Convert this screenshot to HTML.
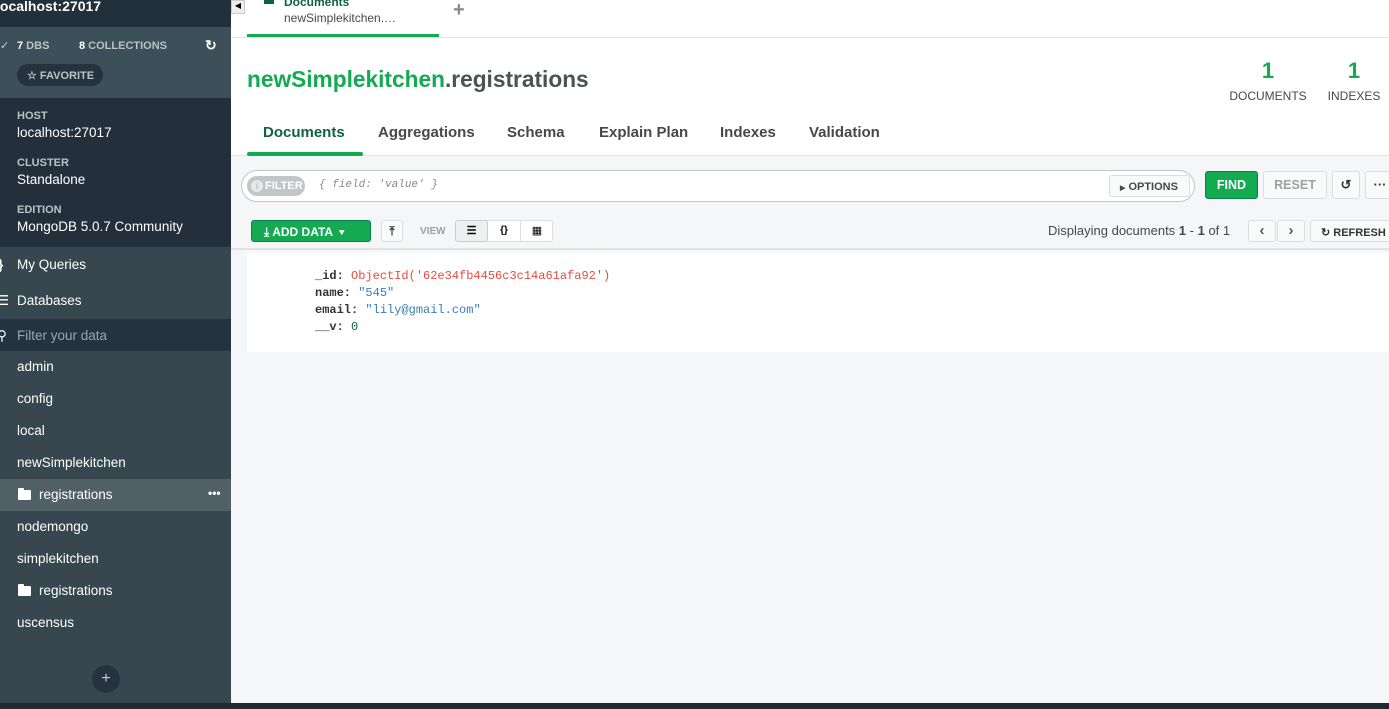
<!DOCTYPE html>
<html><head><style>
*{box-sizing:border-box;margin:0;padding:0}
body{width:1389px;height:709px;overflow:hidden;font-family:"Liberation Sans",sans-serif;background:#f5f6f7;position:relative}
.a{position:absolute}
.sb{left:0;top:0;width:231px;height:709px;background:#37474f;color:#fff}
.lbl{font-size:11px;color:#b8c4c2;font-weight:bold}
.val{font-size:14px;color:#fff}
.ti{font-size:13.5px;color:#fff}
.mono{font-family:"Liberation Mono",monospace;font-size:12px}
.btn{border:1px solid #ddd;border-radius:3px;background:#f9fbfa}
.fold{width:13px;height:10px;background:#fff;border-radius:1px}
.fold:before{content:"";position:absolute;left:0;top:-2px;width:6px;height:3px;background:#fff;border-radius:1px 1px 0 0}
</style></head><body>
<div class="a sb">
 <div class="a" style="left:0;top:0;width:231px;height:27px;background:#22303c"></div>
 <div class="a" style="left:-4px;top:-2px;font-size:14px;font-weight:bold">localhost:27017</div>
 <div class="a" style="left:0;top:27px;width:231px;height:71px;background:#3d4f58"></div>
 <div class="a" style="left:0;top:39px;font-size:11px;color:#c9d1d3">✓</div>
 <div class="a lbl" style="left:17px;top:40px"><span style="color:#fff">7</span> DBS</div>
 <div class="a lbl" style="left:79px;top:40px"><span style="color:#fff">8</span> COLLECTIONS</div>
 <div class="a" style="left:205px;top:37px;font-size:14px;font-weight:bold">↻</div>
 <div class="a" style="left:17px;top:64px;width:86px;height:22px;border-radius:11px;background:#26333f;font-size:11px;color:#b8c4c2;font-weight:bold;padding:5px 0 0 10px">☆ FAVORITE</div>
 <div class="a" style="left:0;top:98px;width:231px;height:149px;background:#232f3b"></div>
 <div class="a lbl" style="left:17px;top:110px">HOST</div>
 <div class="a val" style="left:17px;top:125px;font-size:13.5px">localhost:27017</div>
 <div class="a lbl" style="left:17px;top:157px">CLUSTER</div>
 <div class="a val" style="left:17px;top:172px;font-size:13.5px">Standalone</div>
 <div class="a lbl" style="left:17px;top:204px">EDITION</div>
 <div class="a val" style="left:17px;top:219px;font-size:13.5px">MongoDB 5.0.7 Community</div>
 <div class="a ti" style="left:-2px;top:257px;font-weight:bold">}</div>
 <div class="a ti" style="left:17px;top:257px">My Queries</div>
 <div class="a ti" style="left:-3px;top:293px">☰</div>
 <div class="a ti" style="left:17px;top:293px">Databases</div>
 <div class="a" style="left:0;top:319px;width:231px;height:32px;background:#243340"></div>
 <div class="a ti" style="left:-3px;top:328px">⚲</div>
 <div class="a ti" style="left:17px;top:328px;color:#9aa6ab">Filter your data</div>
 <div class="a ti" style="left:17px;top:359px">admin</div>
 <div class="a ti" style="left:17px;top:391px">config</div>
 <div class="a ti" style="left:17px;top:423px">local</div>
 <div class="a ti" style="left:17px;top:455px">newSimplekitchen</div>
 <div class="a" style="left:0;top:479px;width:231px;height:32px;background:#515f66"></div>
 <div class="a fold" style="left:18px;top:490px"></div>
 <div class="a ti" style="left:39px;top:487px">registrations</div>
 <div class="a" style="left:208px;top:486px;font-size:12px;font-weight:bold">•••</div>
 <div class="a ti" style="left:17px;top:519px">nodemongo</div>
 <div class="a ti" style="left:17px;top:551px">simplekitchen</div>
 <div class="a fold" style="left:18px;top:586px"></div>
 <div class="a ti" style="left:39px;top:583px">registrations</div>
 <div class="a ti" style="left:17px;top:615px">uscensus</div>
 <div class="a" style="left:92px;top:665px;width:28px;height:28px;border-radius:14px;background:#26333f;text-align:center;font-size:16px;line-height:27px;color:#ccc">+</div>
</div>
<div class="a" style="left:0;top:703px;width:1389px;height:6px;background:#1f2a33"></div>
<div class="a" style="left:231px;top:0;width:1158px;height:38px;background:#fff;border-bottom:1px solid #e4e4e4"></div>
<div class="a" style="left:231px;top:0;width:14px;height:14px;background:#eee;border:1px solid #ccc;font-size:8px;text-align:center">◀</div>
<div class="a" style="left:247px;top:0;width:192px;height:37px;background:#fff;border-bottom:3px solid #13aa52"></div>
<div class="a" style="left:264px;top:-4px;width:10px;height:8px;background:#116149"></div>
<div class="a" style="left:284px;top:-5px;font-size:12px;color:#116149;font-weight:bold">Documents</div>
<div class="a" style="left:284px;top:11px;font-size:12px;color:#494747">newSimplekitchen.…</div>
<div class="a" style="left:453px;top:-1px;font-size:20px;color:#888;font-weight:bold">+</div>
<div class="a" style="left:231px;top:38px;width:1158px;height:118px;background:#fff;border-bottom:1px solid #e4e4e4"></div>
<div class="a" style="left:247px;top:66px;font-size:22.7px;font-weight:bold;color:#13aa52">newSimplekitchen<span style="color:#4a5356">.registrations</span></div>
<div class="a" style="left:1228px;top:58px;width:80px;text-align:center;color:#13aa52;font-size:22px;font-weight:bold">1</div>
<div class="a" style="left:1228px;top:89px;width:80px;text-align:center;color:#494747;font-size:12px">DOCUMENTS</div>
<div class="a" style="left:1326px;top:58px;width:56px;text-align:center;color:#13aa52;font-size:22px;font-weight:bold">1</div>
<div class="a" style="left:1326px;top:89px;width:56px;text-align:center;color:#494747;font-size:12px">INDEXES</div>
<div class="a" style="left:263px;top:124px;font-size:15px;font-weight:bold;color:#116149">Documents</div>
<div class="a" style="left:247px;top:152px;width:116px;height:4px;background:#13aa52;border-radius:2px"></div>
<div class="a" style="left:378px;top:124px;font-size:15px;font-weight:bold;color:#494747">Aggregations</div>
<div class="a" style="left:507px;top:124px;font-size:15px;font-weight:bold;color:#494747">Schema</div>
<div class="a" style="left:599px;top:124px;font-size:15px;font-weight:bold;color:#494747">Explain Plan</div>
<div class="a" style="left:720px;top:124px;font-size:15px;font-weight:bold;color:#494747">Indexes</div>
<div class="a" style="left:809px;top:124px;font-size:15px;font-weight:bold;color:#494747">Validation</div>
<div class="a" style="left:241px;top:170px;width:954px;height:32px;background:#fff;border:1px solid #c5c5c5;border-radius:16px"></div>
<div class="a" style="left:247px;top:176px;width:58px;height:20px;border-radius:10px;background:#c1c7c6;color:#fff;font-size:11px;font-weight:bold;padding:4px 0 0 18px">FILTER</div>
<div class="a" style="left:251px;top:180px;width:12px;height:12px;border-radius:6px;background:#e6e9e9;color:#c1c7c6;font-size:9px;text-align:center;line-height:12px;font-weight:bold">i</div>
<div class="a mono" style="left:319px;top:179px;font-size:11px;font-style:italic;color:#8a8a8a">{ field: 'value' }</div>
<div class="a btn" style="left:1109px;top:175px;width:81px;height:22px;font-size:11px;font-weight:bold;color:#494747;padding:5px 0 0 10px"><span style="font-size:7px">▶</span> OPTIONS</div>
<div class="a" style="left:1205px;top:171px;width:53px;height:28px;border-radius:3px;background:#13aa52;border:1px solid #09804c;color:#fff;font-size:12.5px;font-weight:bold;text-align:center;line-height:26px">FIND</div>
<div class="a btn" style="left:1263px;top:171px;width:64px;height:28px;color:#a0a0a0;font-size:12.5px;font-weight:bold;text-align:center;line-height:26px">RESET</div>
<div class="a btn" style="left:1332px;top:171px;width:28px;height:28px;text-align:center;line-height:26px;font-size:13px;font-weight:bold;color:#333">↺</div>
<div class="a btn" style="left:1365px;top:171px;width:30px;height:28px;text-align:center;line-height:26px;font-size:13px;font-weight:bold;color:#333">···</div>
<div class="a" style="left:231px;top:248px;width:1158px;height:2px;background:#e0e2e2"></div>
<div class="a" style="left:251px;top:220px;width:120px;height:22px;background:#13aa52;border:1px solid #09804c;border-radius:3px;color:#fff;font-size:12px;font-weight:bold;padding:4px 0 0 12px">⤓ ADD DATA &nbsp;▾</div>
<div class="a btn" style="left:381px;top:220px;width:22px;height:22px;text-align:center;font-size:12px;line-height:20px;color:#333;font-weight:bold">⤒</div>
<div class="a" style="left:420px;top:226px;font-size:10px;font-weight:bold;color:#a0a0a0">VIEW</div>
<div class="a btn" style="left:455px;top:220px;width:98px;height:22px;background:#fff"></div>
<div class="a" style="left:455px;top:220px;width:33px;height:22px;background:#eef0f0;border:1px solid #ccc;border-radius:3px;text-align:center;font-size:11px;line-height:20px;font-weight:bold">☰</div>
<div class="a" style="left:488px;top:221px;width:33px;height:20px;border-right:1px solid #ddd;text-align:center;font-size:10px;font-weight:bold;line-height:20px">{}</div>
<div class="a" style="left:521px;top:221px;width:32px;height:20px;text-align:center;font-size:11px;line-height:20px">▦</div>
<div class="a" style="left:1048px;top:223px;font-size:13px;color:#494747">Displaying documents <b>1</b> - <b>1</b> of 1</div>
<div class="a btn" style="left:1248px;top:220px;width:28px;height:22px;text-align:center;line-height:19px;font-size:15px;font-weight:bold;color:#555">‹</div>
<div class="a btn" style="left:1277px;top:220px;width:28px;height:22px;text-align:center;line-height:19px;font-size:15px;font-weight:bold;color:#555">›</div>
<div class="a btn" style="left:1310px;top:220px;width:90px;height:22px;font-size:11px;font-weight:bold;color:#333;padding:5px 0 0 10px">↻ REFRESH</div>
<div class="a" style="left:247px;top:252px;width:1142px;height:100px;background:#fff"></div>
<div class="a mono" style="left:315px;top:268px;line-height:17px;color:#333">
<div><b>_id:</b> <span style="color:#e74b3c">ObjectId('62e34fb4456c3c14a61afa92')</span></div>
<div><b>name:</b> <span style="color:#3b7eb5">"545"</span></div>
<div><b>email:</b> <span style="color:#3b7eb5">"lily@gmail.com"</span></div>
<div><b>__v:</b> <span style="color:#116149">0</span></div>
</div>
</body></html>
